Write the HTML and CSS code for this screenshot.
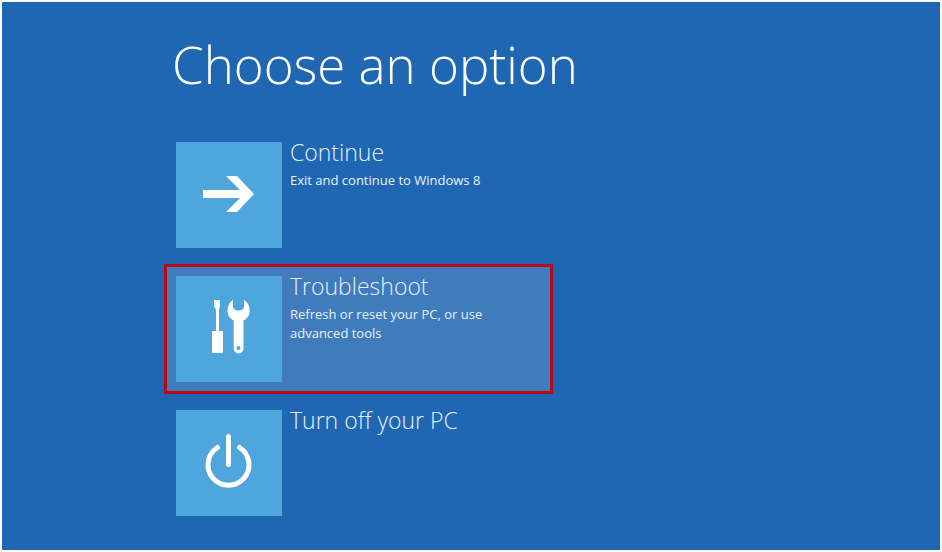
FILE: index.html
```html
<!DOCTYPE html>
<html lang="en">
<head>
  <meta charset="UTF-8" />
  <meta name="viewport" content="width=device-width, initial-scale=1.0"/>
  <title>Choose an option</title>
  <link rel="stylesheet" href="styles.css">
</head>
<body>
  <main class="screen">
    <h1 class="heading">Choose an option</h1>

    <div class="options">
      <button class="option" type="button">
        <span class="tile">
          <svg viewBox="0 0 106 106" aria-hidden="true">
            <path d="M27 48H64L50 34H61L78 52L61 70H50L64 56H27Z" fill="#fff"/>
          </svg>
        </span>
        <span class="text">
          <span class="name">Continue</span>
          <span class="desc">Exit and continue to Windows 8</span>
        </span>
      </button>

      <button class="option selected" type="button">
        <span class="tile">
          <svg viewBox="0 0 106 106" aria-hidden="true">
            <path d="M38 24h6v6l-1 4v21h3q1 0 1 1v20q0 1-1 1H37q-1 0-1-1V56q0-1 1-1h3V34l-2-4z" fill="#fff"/>
            <path d="M57 24V31Q58 34.500 62.500 34.500Q67 34.500 68 31V24C71.500 26 73.700 29.700 73.700 34C73.700 39 71.500 42.500 67.500 44.500V72.500A4.900 4.900 0 0 1 57.700 72.500V44.500C53.700 42.500 51.500 39 51.500 34C51.500 29.700 53.500 26 57 24Z" fill="#fff"/>
            <circle cx="62.500" cy="72" r="2" fill="#4ea6dd"/>
          </svg>
        </span>
        <span class="text">
          <span class="name">Troubleshoot</span>
          <span class="desc">Refresh or reset your PC, or use advanced tools</span>
        </span>
      </button>

      <button class="option" type="button">
        <span class="tile">
          <svg viewBox="0 0 106 106" aria-hidden="true">
            <g fill="none" stroke="#fff" stroke-width="5" stroke-linecap="round">
              <path d="M52.500 26.500V54.500"/>
              <path d="M41.500 37.500A20.500 20.500 0 1 0 63.500 37.500"/>
            </g>
          </svg>
        </span>
        <span class="text">
          <span class="name">Turn off your PC</span>
        </span>
      </button>
    </div>
  </main>
</body>
</html>
```
FILE: styles.css
```css
* {
  box-sizing: border-box;
}

body {
  margin: 0;
  background-color: #fff;
  font-family: 'Segoe UI', 'Open Sans', sans-serif;
  color: #fff;
}

.screen {
  min-height: calc(100vh - 4px);
  margin: 2px;
  padding: 24px 24px 20px 162px;
  background-color: #1f67b3;
}

.heading {
  margin: 0 0 28px 8px;
  font-size: 51px;
  line-height: 76px;
  font-weight: 300;
}

.options {
  display: flex;
  flex-direction: column;
  gap: 4px;
  max-width: 389px;
}

.option {
  display: flex;
  gap: 8px;
  width: 100%;
  padding: 9px;
  border: 3px solid transparent;
  background: none;
  color: #fff;
  font-family: inherit;
  text-align: left;
  cursor: pointer;
}

.option.selected {
  background-color: #3f7bbd;
  border-color: #b80a14;
}

.tile {
  flex: none;
  width: 106px;
  height: 106px;
  background-color: #4ea6dd;
}

.tile svg {
  display: block;
}

.text {
  display: flex;
  flex-direction: column;
  max-width: 212px;
}

.name {
  font-size: 23px;
  line-height: 20px;
  font-weight: 300;
  color: #e6effa;
}

.desc {
  margin-top: 9px;
  font-size: 13px;
  line-height: 19px;
  color: #eaf2fa;
}
```
